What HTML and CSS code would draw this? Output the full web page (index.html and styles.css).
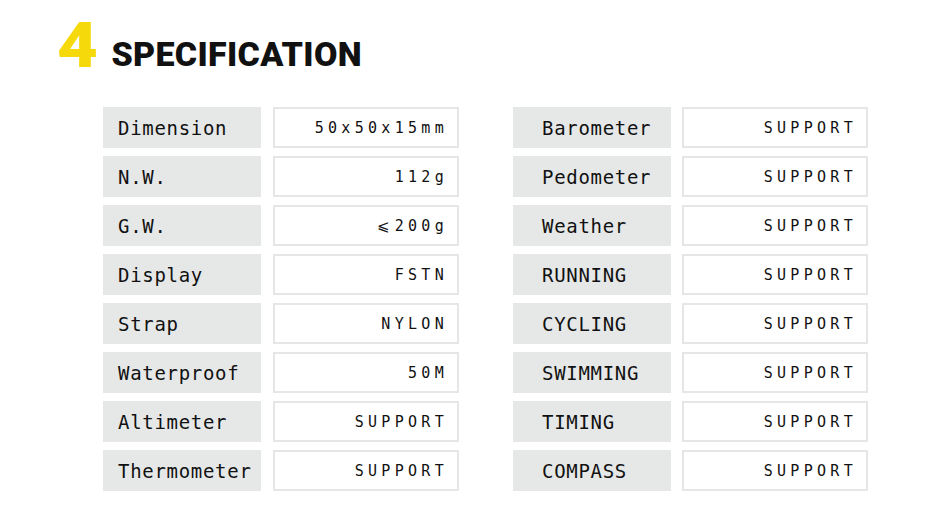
FILE: index.html
```html
<!DOCTYPE html>
<html>
<head>
<meta charset="utf-8">
<link rel="stylesheet" href="styles.css">
</head>
<body>
<div class="page">
  <h1 class="title"><span class="num">4</span><span class="word">SPECIFICATION</span></h1>
  <div class="tables">
    <div class="table left">
      <div class="row"><div class="label">Dimension</div><div class="value">50x50x15mm</div></div>
      <div class="row"><div class="label">N.W.</div><div class="value">112g</div></div>
      <div class="row"><div class="label">G.W.</div><div class="value">⩽200g</div></div>
      <div class="row"><div class="label">Display</div><div class="value">FSTN</div></div>
      <div class="row"><div class="label">Strap</div><div class="value">NYLON</div></div>
      <div class="row"><div class="label">Waterproof</div><div class="value">50M</div></div>
      <div class="row"><div class="label">Altimeter</div><div class="value">SUPPORT</div></div>
      <div class="row"><div class="label">Thermometer</div><div class="value">SUPPORT</div></div>
    </div>
    <div class="table right">
      <div class="row"><div class="label">Barometer</div><div class="value">SUPPORT</div></div>
      <div class="row"><div class="label">Pedometer</div><div class="value">SUPPORT</div></div>
      <div class="row"><div class="label">Weather</div><div class="value">SUPPORT</div></div>
      <div class="row"><div class="label">RUNNING</div><div class="value">SUPPORT</div></div>
      <div class="row"><div class="label">CYCLING</div><div class="value">SUPPORT</div></div>
      <div class="row"><div class="label">SWIMMING</div><div class="value">SUPPORT</div></div>
      <div class="row"><div class="label">TIMING</div><div class="value">SUPPORT</div></div>
      <div class="row"><div class="label">COMPASS</div><div class="value">SUPPORT</div></div>
    </div>
  </div>
</div>
</body>
</html>
```
FILE: styles.css
```css
html, body {
  margin: 0;
  padding: 0;
  background: #ffffff;
}
.page {
  width: 950px;
  height: 522px;
  overflow: hidden;
  box-sizing: border-box;
  padding: 0 0 0 57px;
}
.title {
  margin: 0;
  height: 107px;
  display: flex;
  align-items: flex-start;
  padding-top: 14px;
  box-sizing: border-box;
}
.num {
  font-family: "Roboto", "DejaVu Sans", sans-serif;
  font-weight: 900;
  font-size: 63px;
  line-height: 63px;
  color: #f6d90b;
  transform: scaleX(1.12);
  transform-origin: left center;
  display: inline-block;
}
.word {
  font-family: "Roboto", "DejaVu Sans", sans-serif;
  font-weight: 900;
  font-size: 34px;
  line-height: 35px;
  color: #111;
  margin-left: 18px;
  margin-top: 23px;
  letter-spacing: 0.3px;
}
.tables {
  display: flex;
  gap: 54px;
  padding-left: 46px;
  margin-top: 0;
}
.table {
  display: flex;
  flex-direction: column;
  gap: 8px;
}
.row {
  display: flex;
  gap: 12px;
  height: 41px;
}
.label {
  width: 158px;
  background: #e6e8e8;
  font-family: "DejaVu Sans Mono", monospace;
  font-size: 19px;
  letter-spacing: 0.7px;
  color: #111;
  display: flex;
  align-items: center;
  padding-left: 15px;
  box-sizing: border-box;
}
.right .label {
  padding-left: 29px;
}
.right .row {
  gap: 11px;
}
.value {
  width: 186px;
  background: #fff;
  border: 2px solid #e6e6e6;
  box-sizing: border-box;
  font-family: "DejaVu Sans Mono", monospace;
  font-size: 15px;
  letter-spacing: 4.3px;
  color: #111;
  display: flex;
  align-items: center;
  justify-content: flex-end;
  padding-right: 9px;
}
```
